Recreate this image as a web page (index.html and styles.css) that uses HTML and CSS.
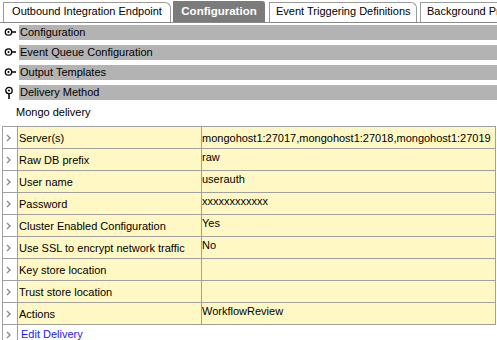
FILE: index.html
```html
<!DOCTYPE html>
<html lang="en">
<head>
    <meta charset="UTF-8">
    <title>Delivery</title>
    <link rel="stylesheet" href="styles.css">
</head>
<body>
<div class="tabs">
    <div class="tab t-out">Outbound Integration Endpoint</div>
    <div class="tab active">Configuration</div>
    <div class="tab t-evt">Event Triggering Definitions</div>
    <div class="tab t-bg">Background Processes</div>
</div>

<div class="sections">
    <div class="sec">
        <svg class="ico" width="19" height="15" viewBox="0 0 19 15"><circle cx="8.5" cy="7" r="3.2" fill="none" stroke="#000" stroke-width="1.3"/><circle cx="8.5" cy="7" r="1" fill="#000"/><line x1="11.5" y1="7" x2="16" y2="7" stroke="#000" stroke-width="1.5"/></svg>
        <div class="bar">Configuration</div>
    </div>
    <div class="sec">
        <svg class="ico" width="19" height="15" viewBox="0 0 19 15"><circle cx="8.5" cy="7" r="3.2" fill="none" stroke="#000" stroke-width="1.3"/><circle cx="8.5" cy="7" r="1" fill="#000"/><line x1="11.5" y1="7" x2="16" y2="7" stroke="#000" stroke-width="1.5"/></svg>
        <div class="bar">Event Queue Configuration</div>
    </div>
    <div class="sec">
        <svg class="ico" width="19" height="15" viewBox="0 0 19 15"><circle cx="8.5" cy="7" r="3.2" fill="none" stroke="#000" stroke-width="1.3"/><circle cx="8.5" cy="7" r="1" fill="#000"/><line x1="11.5" y1="7" x2="16" y2="7" stroke="#000" stroke-width="1.5"/></svg>
        <div class="bar">Output Templates</div>
    </div>
    <div class="sec">
        <svg class="ico" width="19" height="15" viewBox="0 0 19 15"><circle cx="9" cy="5.5" r="3.2" fill="none" stroke="#000" stroke-width="1.3"/><circle cx="9" cy="5.5" r="1" fill="#000"/><line x1="9" y1="8.5" x2="9" y2="14" stroke="#000" stroke-width="1.5"/></svg>
        <div class="bar">Delivery Method</div>
    </div>
</div>

<p class="sub">Mongo delivery</p>

<table class="props">
    <tr><td class="arr"><svg width="6" height="8" viewBox="0 0 6 8"><polyline points="1,1 4,4 1,7" fill="none" stroke="#8a8a8a" stroke-width="1.4"/></svg></td><td class="lbl">Server(s)</td><td class="val mid">mongohost1:27017,mongohost1:27018,mongohost1:27019</td></tr>
    <tr><td class="arr"><svg width="6" height="8" viewBox="0 0 6 8"><polyline points="1,1 4,4 1,7" fill="none" stroke="#8a8a8a" stroke-width="1.4"/></svg></td><td class="lbl">Raw DB prefix</td><td class="val">raw</td></tr>
    <tr><td class="arr"><svg width="6" height="8" viewBox="0 0 6 8"><polyline points="1,1 4,4 1,7" fill="none" stroke="#8a8a8a" stroke-width="1.4"/></svg></td><td class="lbl">User name</td><td class="val">userauth</td></tr>
    <tr><td class="arr"><svg width="6" height="8" viewBox="0 0 6 8"><polyline points="1,1 4,4 1,7" fill="none" stroke="#8a8a8a" stroke-width="1.4"/></svg></td><td class="lbl">Password</td><td class="val">xxxxxxxxxxxx</td></tr>
    <tr><td class="arr"><svg width="6" height="8" viewBox="0 0 6 8"><polyline points="1,1 4,4 1,7" fill="none" stroke="#8a8a8a" stroke-width="1.4"/></svg></td><td class="lbl">Cluster Enabled Configuration</td><td class="val">Yes</td></tr>
    <tr><td class="arr"><svg width="6" height="8" viewBox="0 0 6 8"><polyline points="1,1 4,4 1,7" fill="none" stroke="#8a8a8a" stroke-width="1.4"/></svg></td><td class="lbl">Use SSL to encrypt network traffic</td><td class="val">No</td></tr>
    <tr><td class="arr"><svg width="6" height="8" viewBox="0 0 6 8"><polyline points="1,1 4,4 1,7" fill="none" stroke="#8a8a8a" stroke-width="1.4"/></svg></td><td class="lbl">Key store location</td><td class="val"></td></tr>
    <tr><td class="arr"><svg width="6" height="8" viewBox="0 0 6 8"><polyline points="1,1 4,4 1,7" fill="none" stroke="#8a8a8a" stroke-width="1.4"/></svg></td><td class="lbl">Trust store location</td><td class="val"></td></tr>
    <tr><td class="arr"><svg width="6" height="8" viewBox="0 0 6 8"><polyline points="1,1 4,4 1,7" fill="none" stroke="#8a8a8a" stroke-width="1.4"/></svg></td><td class="lbl">Actions</td><td class="val">WorkflowReview</td></tr>
    <tr class="edit"><td class="arr"><svg width="6" height="8" viewBox="0 0 6 8"><polyline points="1,1 4,4 1,7" fill="none" stroke="#8a8a8a" stroke-width="1.4"/></svg></td><td colspan="2" class="link"><a href="#">Edit Delivery</a></td></tr>
</table>
</body>
</html>
```
FILE: styles.css
```css
*{
    box-sizing: border-box;
}
body{
    margin: 0;
    font-family: "Liberation Sans", Arial, sans-serif;
    font-size: 11px;
    color: #000;
    background-color: #fff;
    overflow: hidden;
}

.tabs{
    display: flex;
    align-items: flex-end;
    height: 23px;
    padding: 1px 0 0 3px;
    border-bottom: 1px solid #8a8a8a;
    white-space: nowrap;
    overflow: hidden;
}
.tab{
    height: 20px;
    line-height: 16px;
    padding: 0 6px;
    border: 1px solid #9a9a9a;
    border-bottom: none;
    border-radius: 0 6px 0 0;
    flex-shrink: 0;
    text-align: center;
}
.t-out{
    width: 168px;
}
.t-evt{
    width: 148px;
    margin-left: 4px;
}
.t-bg{
    margin-left: 3px;
    text-align: left;
}
.tab.active{
    width: 92px;
    margin-left: 2px;
    height: 21px;
    line-height: 18px;
    background-color: #7b7b7b;
    border-color: #7b7b7b;
    color: #fff;
    font-weight: bold;
    font-size: 11.5px;
    padding: 0;
    border-radius: 0 3px 0 0;
}

.sections{
    padding-top: 2px;
}
.sec{
    display: flex;
    height: 15px;
    margin-bottom: 5px;
}
.ico{
    flex-shrink: 0;
}
.bar{
    flex: 1;
    background-color: #b3b3b3;
    line-height: 15px;
    padding-left: 1px;
}

.sub{
    margin: 4px 0 0 16px;
    height: 21px;
    line-height: 14px;
}

.props{
    border-collapse: collapse;
    margin-left: 2px;
    width: 494px;
    table-layout: fixed;
}
.props td{
    border: 1px solid #a0a0a0;
    height: 22px;
    padding: 0;
    white-space: nowrap;
    overflow: hidden;
}
.arr{
    width: 15px;
    background-color: #fff;
    vertical-align: middle;
}
.arr svg{
    display: block;
    margin: 0 0 0 3px;
}
.lbl{
    width: 184px;
    background-color: #fff8c4;
    padding-left: 1px !important;
    vertical-align: middle;
}
.val{
    background-color: #fff8c4;
    vertical-align: top;
    line-height: 14px;
    padding-top: 1px !important;
}
.val.mid{
    vertical-align: middle;
    padding-top: 0 !important;
}
.edit .arr{
    border-bottom: none;
    vertical-align: top;
    padding-top: 6px !important;
}
.props .link{
    border: none;
    border-top: 1px solid #a0a0a0;
    padding: 2px 0 0 3px;
    vertical-align: top;
    line-height: 14px;
}
.link a{
    color: #1b1bf5;
    text-decoration: none;
}
```
